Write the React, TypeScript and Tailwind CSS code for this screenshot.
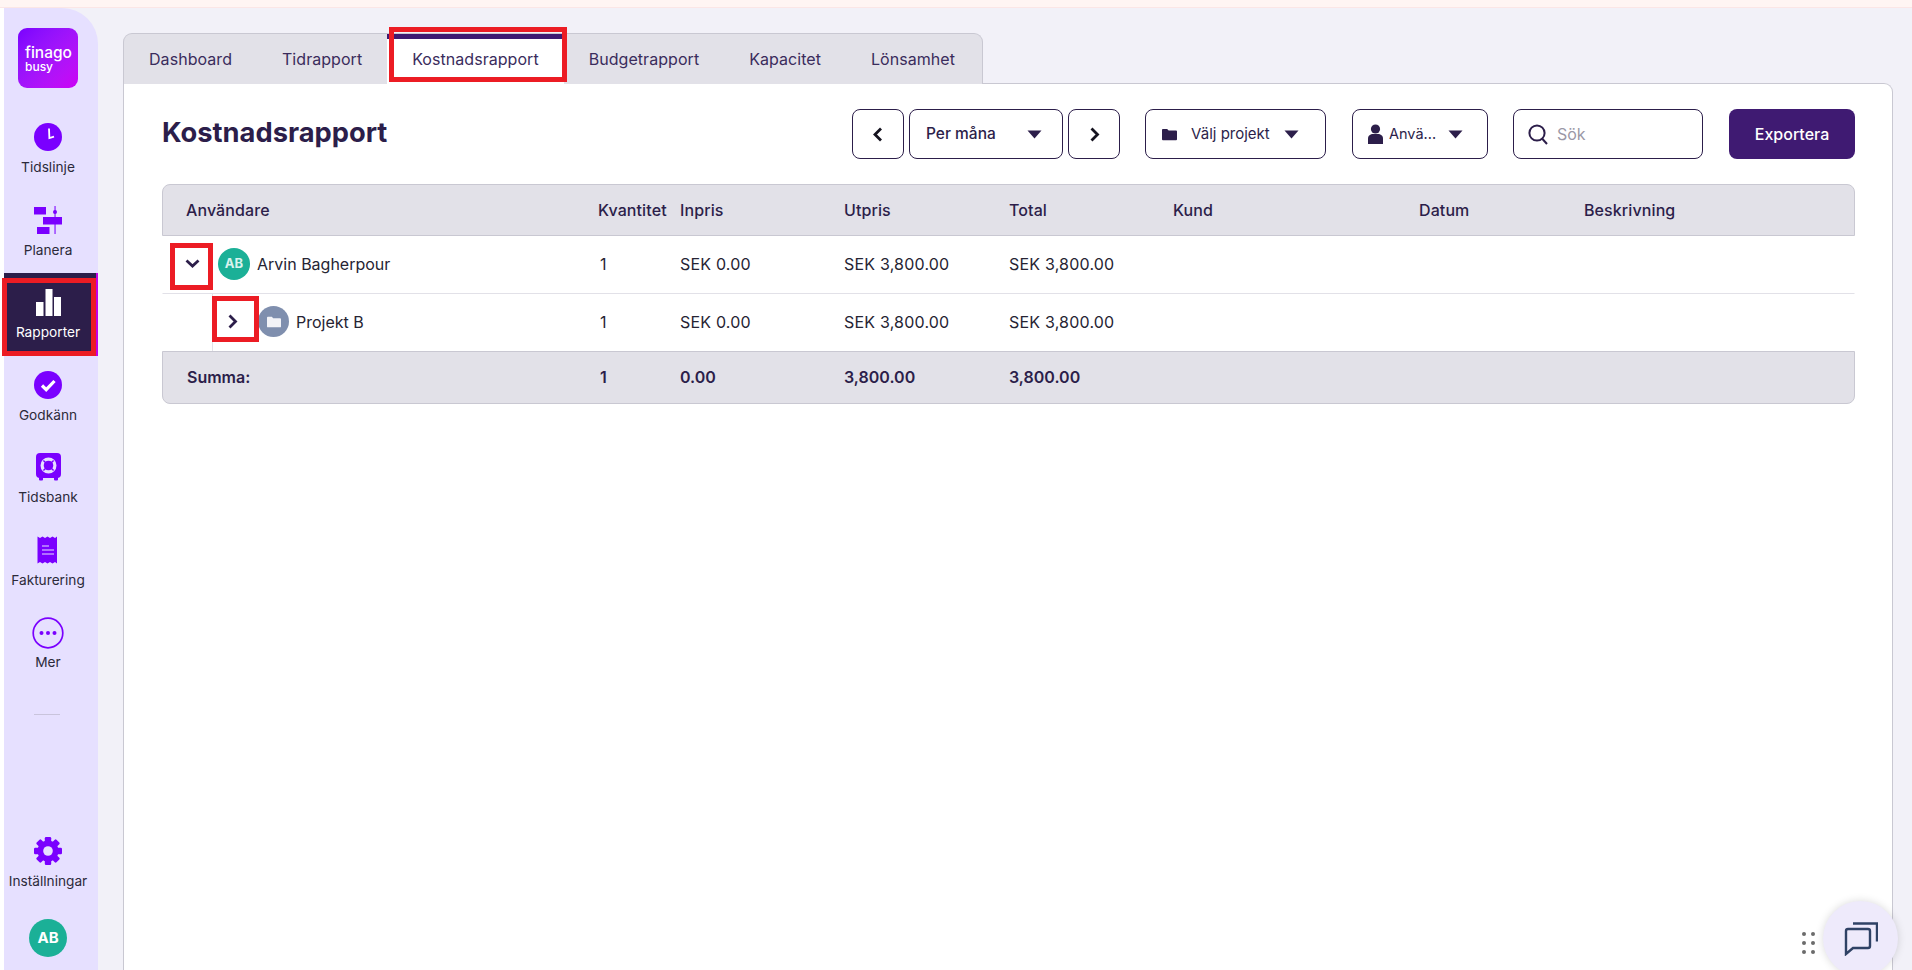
import React from "react";

const ink = "#2c1e4a";

function Clock() {
  return (
    <svg width="28" height="28" viewBox="0 0 28 28">
      <circle cx="14" cy="14" r="14" fill="#7a00ff" />
      <path d="M15 5.5l0.4 9.5 4.6-1.4" fill="none" stroke="#fff" strokeWidth="1.8" />
    </svg>
  );
}
function Plan() {
  return (
    <svg width="28" height="28" viewBox="0 0 28 28" fill="#7a00ff">
      <rect x="0" y="1" width="12" height="7.5" />
      <rect x="9" y="11" width="19" height="7.5" />
      <rect x="3" y="21" width="12.5" height="7.5" />
      <rect x="20.3" y="0" width="1.5" height="28" opacity="0.7" />
      <circle cx="21" cy="6" r="2" />
    </svg>
  );
}
function Bars() {
  return (
    <svg width="25" height="27" viewBox="0 0 25 27" fill="#fff">
      <rect x="0" y="13" width="7.5" height="14" />
      <rect x="9.5" y="0" width="7" height="27" />
      <rect x="18" y="8" width="7" height="19" />
    </svg>
  );
}
function Check() {
  return (
    <svg width="28" height="28" viewBox="0 0 28 28">
      <circle cx="14" cy="14" r="14" fill="#7a00ff" />
      <path d="M8 14.5l4.2 4.2L20.5 10" fill="none" stroke="#fff" strokeWidth="3.2" />
    </svg>
  );
}
function Safe() {
  return (
    <svg width="25" height="28" viewBox="0 0 25 28">
      <rect x="0" y="0" width="25" height="25" rx="4" fill="#7a00ff" />
      <rect x="3" y="24" width="4" height="3.5" rx="1" fill="#7a00ff" />
      <rect x="18" y="24" width="4" height="3.5" rx="1" fill="#7a00ff" />
      <circle cx="12.5" cy="12.5" r="6.4" fill="none" stroke="#e6dfff" strokeWidth="3.2" />
      <path d="M7.4 7.4l2.6 2.6M17.6 7.4l-2.6 2.6M7.4 17.6l2.6-2.6M17.6 17.6l-2.6-2.6" stroke="#7a00ff" strokeWidth="1.4" />
    </svg>
  );
}
function Receipt() {
  return (
    <svg width="22" height="28" viewBox="0 0 22 28">
      <path
        d="M0.5 0.5l2.5 1.5 2.5-1.5 2.5 1.5 2.5-1.5 2.5 1.5 2.5-1.5 2.5 1.5 2-1.5v27l-2-1.5-2.5 1.5-2.5-1.5-2.5 1.5-2.5-1.5-2.5 1.5-2.5-1.5-2.5 1.5z"
        fill="#7a00ff"
      />
      <path d="M5 10h7M5 14h12M5 18h12" stroke="#e6dfff" strokeWidth="1.1" />
    </svg>
  );
}
function More() {
  return (
    <svg width="32" height="32" viewBox="0 0 32 32" className="-mb-[3px]">
      <circle cx="16" cy="16" r="14.8" fill="none" stroke="#7a00ff" strokeWidth="1.7" />
      <circle cx="9.5" cy="16" r="2" fill="#7a00ff" />
      <circle cx="16" cy="16" r="2" fill="#7a00ff" />
      <circle cx="22.5" cy="16" r="2" fill="#7a00ff" />
    </svg>
  );
}
function Gear() {
  return (
    <svg width="28" height="28" viewBox="0 0 28 28">
      <g fill="#7a00ff">
        <circle cx="14" cy="14" r="10.5" />
        {[0, 45, 90, 135, 180, 225, 270, 315].map((a) => (
          <rect key={a} x="10.8" y="0" width="6.4" height="6" rx="1.2" transform={`rotate(${a} 14 14)`} />
        ))}
      </g>
      <circle cx="14" cy="14" r="4.8" fill="#e6dfff" />
    </svg>
  );
}
function Folder({ fill, size = 16 }: { fill: string; size?: number }) {
  return (
    <svg width={size} height={size} viewBox="0 0 16 16">
      <path d="M0 3a1 1 0 0 1 1-1h4.5l1.6 1.8H15a1 1 0 0 1 1 1V13a1 1 0 0 1-1 1H1a1 1 0 0 1-1-1z" fill={fill} />
    </svg>
  );
}
function Caret() {
  return (
    <svg width="15" height="9" viewBox="0 0 15 9">
      <path d="M0.5 0.5h14L7.5 8.5z" fill={ink} />
    </svg>
  );
}
function Chevron({ dir, color = ink }: { dir: "left" | "right" | "down"; color?: string }) {
  const d = dir === "left" ? "M10 1.5L4 7.5l6 6" : dir === "right" ? "M4.5 1.5l6 6-6 6" : "M1.5 4.5l6 5.5 6-5.5";
  return (
    <svg width="15" height="15" viewBox="0 0 15 15">
      <path d={d} fill="none" stroke={color} strokeWidth="2.8" />
    </svg>
  );
}

function NavItem({ icon, label, active }: { icon: React.ReactNode; label: string; active?: boolean }) {
  return (
    <div
      className={`flex h-[82.5px] w-full shrink-0 flex-col items-center ${
        active ? "border-r-2 border-[#c400e6] bg-[#2c1e4a] pr-[4px] text-white" : "pr-[6px] text-[#2c2a3a]"
      }`}
    >
      <div className="flex h-[43px] w-full items-end justify-center">{icon}</div>
      <div className="mt-[6px] whitespace-nowrap text-[13.7px] leading-[20px]">{label}</div>
    </div>
  );
}

function Sidebar() {
  return (
    <aside className="flex h-full w-[94px] shrink-0 flex-col rounded-tr-[36px] bg-[#e6e0ff]">
      <div className="ml-[14px] mt-[20px] flex h-[60px] w-[60px] flex-col justify-center rounded-[9px] bg-gradient-to-br from-[#7a00ff] to-[#cc00f5] pl-[7px] text-white">
        <div className="text-[15.5px] font-medium leading-[17px]">finago</div>
        <div className="text-[12px] font-medium leading-[12px]">busy</div>
      </div>
      <div className="h-[20px] shrink-0" />
      <NavItem icon={<Clock />} label="Tidslinje" />
      <NavItem icon={<Plan />} label="Planera" />
      <NavItem icon={<Bars />} label="Rapporter" active />
      <NavItem icon={<Check />} label="Godkänn" />
      <NavItem icon={<Safe />} label="Tidsbank" />
      <NavItem icon={<Receipt />} label="Fakturering" />
      <NavItem icon={<More />} label="Mer" />
      <div className="ml-[30px] mt-[28px] h-px w-[26px] bg-[#c9c4dc]" />
      <div className="flex-1" />
      <NavItem icon={<Gear />} label="Inställningar" />
      <div className="mb-[13px] ml-[25px] mt-[15px] flex h-[38px] w-[38px] shrink-0 items-center justify-center rounded-full bg-[#1bb097] text-[15px] font-bold text-white">
        AB
      </div>
    </aside>
  );
}

const tabs = ["Dashboard", "Tidrapport", "Kostnadsrapport", "Budgetrapport", "Kapacitet", "Lönsamhet"];

function Tabs() {
  return (
    <div className="relative z-10 -mb-px flex h-[51px] w-[860px] overflow-hidden rounded-t-[9px] border border-b-0 border-[#c9c8d2] bg-[#e2e1e8]">
      {tabs.map((t, i) => (
        <div
          key={t}
          className={`flex items-center whitespace-nowrap px-[25px] text-[16px] tracking-[0.05px] text-[#3a2c5c] ${
            i === 2 ? "border-y-[5px] border-b-white border-t-[#3f1a72] bg-white" : ""
          }`}
        >
          {t}
        </div>
      ))}
    </div>
  );
}

function Btn({ className, children }: { className: string; children: React.ReactNode }) {
  return (
    <div className={`flex h-[50px] items-center rounded-[8px] border border-[#2c1e4a] bg-white text-[#2c1e4a] ${className}`}>
      {children}
    </div>
  );
}

function Toolbar() {
  return (
    <div className="flex h-[50px] items-center">
      <div className="pb-[3px] text-[27.3px] font-bold leading-[34px] text-[#2c1e4a]">Kostnadsrapport</div>
      <div className="flex-1" />
      <Btn className="w-[52px] justify-center">
        <Chevron dir="left" color="#15131f" />
      </Btn>
      <Btn className="ml-[5px] w-[154px] pl-[16px]">
        <div className="w-[72px] whitespace-nowrap text-[15.5px] font-medium">Per måna</div>
        <div className="ml-[29px]">
          <Caret />
        </div>
      </Btn>
      <Btn className="ml-[5px] w-[52px] justify-center">
        <Chevron dir="right" color="#15131f" />
      </Btn>
      <Btn className="ml-[25px] w-[181px] pl-[16px] text-[15px]">
        <Folder fill={ink} size={15} />
        <span className="ml-[14px] whitespace-nowrap">Välj projekt</span>
        <span className="ml-[14px]">
          <Caret />
        </span>
      </Btn>
      <Btn className="ml-[26px] w-[136px] pl-[15px] text-[14.5px]">
        <svg width="15" height="20" viewBox="0 0 15 20" fill={ink}>
          <circle cx="7.5" cy="5" r="4.6" />
          <path d="M0 20v-5.5C0 11.5 2.5 10 5 10h5c2.5 0 5 1.5 5 4.5V20z" />
        </svg>
        <span className="ml-[6px] whitespace-nowrap">Anvä...</span>
        <span className="ml-[12px]">
          <Caret />
        </span>
      </Btn>
      <Btn className="ml-[25px] w-[190px] pl-[14px]">
        <svg width="20" height="21" viewBox="0 0 20 21" fill="none" stroke={ink} strokeWidth="2">
          <circle cx="9" cy="9" r="7.6" />
          <path d="M14 14.5l5 5.5" />
        </svg>
        <span className="ml-[9px] text-[16px] text-[#9b98a6]">Sök</span>
      </Btn>
      <div className="ml-[26px] flex h-[50px] w-[126px] items-center justify-center rounded-[8px] bg-[#3f1a72] text-[16px] font-medium text-white">
        Exportera
      </div>
    </div>
  );
}

const cols = "grid grid-cols-[435px_82px_164px_165px_164px_246px_165px_1fr] items-center";

function Cells({ cells }: { cells: string[] }) {
  return (
    <>
      {cells.map((c, i) => (
        <div key={i} className={`whitespace-nowrap ${i === 0 ? "pl-[2px]" : ""}`}>
          {c}
        </div>
      ))}
    </>
  );
}

const dataCells = ["1", "SEK 0.00", "SEK 3,800.00", "SEK 3,800.00", "", "", ""];

function Table() {
  return (
    <div className="mt-[25px] text-[16px] text-[#2c1e4a]">
      <div className={`${cols} h-[52px] rounded-t-[8px] border border-[#c9c8d2] bg-[#e2e1e8] font-medium tracking-[0.1px]`}>
        <div className="pl-[23px]">Användare</div>
        {["Kvantitet", "Inpris", "Utpris", "Total", "Kund", "Datum", "Beskrivning"].map((c) => (
          <div key={c} className="whitespace-nowrap">
            {c}
          </div>
        ))}
      </div>
      <div className={`${cols} h-[58px] border-x border-b border-x-transparent border-b-[#e2e1e8] pb-[2px] tracking-[0.2px] text-[#262433]`}>
        <div className="flex items-center pl-[22px]">
          <Chevron dir="down" />
          <div className="ml-[18px] flex h-[32px] w-[32px] items-center justify-center rounded-full bg-[#1bb097] text-[13px] font-bold text-[#d8f3ee]">
            AB
          </div>
          <span className="ml-[7px] tracking-normal">Arvin Bagherpour</span>
        </div>
        <Cells cells={dataCells} />
      </div>
      <div className={`${cols} h-[57px] border-x border-x-transparent tracking-[0.2px] text-[#262433]`}>
        <div className="ml-[49px] flex h-full items-center border-l border-[#e2e1e8] pb-[2px] pl-[12px]">
          <Chevron dir="right" />
          <div className="ml-[18px] flex h-[31px] w-[31px] items-center justify-center rounded-full bg-[#7f8fae]">
            <Folder fill="#f2f3f7" size={14} />
          </div>
          <span className="ml-[7px] tracking-normal">Projekt B</span>
        </div>
        <div className="contents [&>div]:pb-[2px]">
          <Cells cells={dataCells} />
        </div>
      </div>
      <div className={`${cols} h-[53px] rounded-b-[8px] border border-[#c9c8d2] bg-[#e2e1e8] pb-[2px] font-semibold`}>
        <div className="pl-[24px]">Summa:</div>
        <Cells cells={["1", "0.00", "3,800.00", "3,800.00", "", "", ""]} />
      </div>
    </div>
  );
}

function Marker({ className }: { className: string }) {
  return <div className={`absolute z-20 border-[5px] border-[#ec1c24] ${className}`} />;
}

export default function App() {
  return (
    <div className="relative flex h-[970px] w-[1912px] flex-col overflow-hidden bg-[#f2f1f8] [font-family:Inter,'Liberation_Sans',sans-serif]">
      <div className="h-[8px] shrink-0 border-b border-[#fbe6e6] bg-[#fff5f3]" />
      <div className="flex min-h-0 flex-1">
        <div className="w-[4px] shrink-0 bg-white" />
        <Sidebar />
        <main className="flex min-w-0 flex-1 flex-col pl-[25px] pr-[19px] pt-[25px]">
          <Tabs />
          <section className="flex-1 rounded-tr-[9px] border border-b-0 border-[#c9c8d2] bg-white pl-[38px] pr-[37px] pt-[25px]">
            <Toolbar />
            <Table />
          </section>
        </main>
      </div>

      {/* annotations */}
      <Marker className="left-[2px] top-[278px] h-[78px] w-[94px]" />
      <Marker className="left-[389px] top-[27px] h-[55px] w-[178px]" />
      <Marker className="left-[170px] top-[243px] h-[47px] w-[43px]" />
      <Marker className="left-[212px] top-[296px] h-[46px] w-[47px]" />

      {/* chat */}
      <div className="absolute left-[1802px] top-[932px] grid grid-cols-2 gap-x-[5px] gap-y-[5px]">
        {[0, 1, 2, 3, 4, 5].map((i) => (
          <div key={i} className="h-[4px] w-[4px] rounded-full bg-[#6b6b6b]" />
        ))}
      </div>
      <div className="absolute left-[1823px] top-[901px] flex h-[75px] w-[75px] items-center justify-center rounded-full bg-[#eeeafb] shadow-[0_0_8px_rgba(0,0,0,0.15)]">
        <svg width="34" height="34" viewBox="0 0 34 34" fill="none" stroke="#2f4265" strokeWidth="2.4">
          <path d="M9 1.5h24v18" />
          <path d="M4 7h20a2 2 0 0 1 2 2v15a2 2 0 0 1-2 2H9l-7 6V9a2 2 0 0 1 2-2z" />
        </svg>
      </div>
    </div>
  );
}
